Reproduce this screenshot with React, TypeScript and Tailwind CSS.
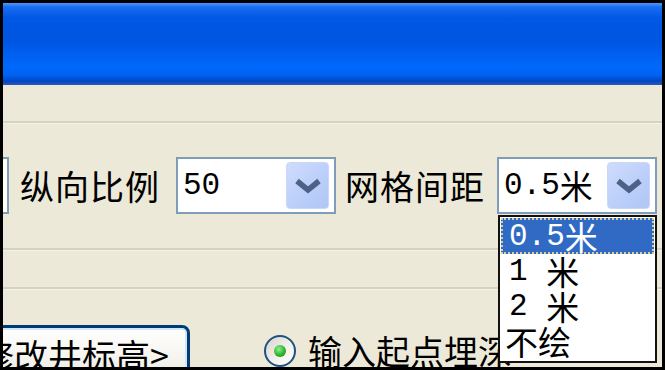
const cjk = "font-['Noto_Sans_CJK_SC','Noto_Sans_CJK_JP',sans-serif]";
const mono = "font-['Liberation_Mono',monospace]";

function Chevron() {
  return (
    <svg width="28" height="16" viewBox="0 0 28 16">
      <path d="M3 3 L14 12 L25 3" fill="none" stroke="#4d6185" strokeWidth="5.5" strokeLinejoin="miter" />
    </svg>
  );
}

function Combo({ children }: { children: React.ReactNode }) {
  return (
    <div className="flex h-[57px] w-[160px] items-center border-2 border-[#7f9db9] bg-white pl-[5px] pr-[5px]">
      <div className="flex flex-1 items-center text-black">{children}</div>
      <div className="flex h-[47px] w-[43px] items-center justify-center rounded-[4px] border border-[#c9d8fa] bg-[linear-gradient(135deg,#cfdcfc_0%,#bccffa_55%,#b0c6f5_100%)]">
        <Chevron />
      </div>
    </div>
  );
}

function Val({ num, unit, light }: { num: string; unit: string; light?: boolean }) {
  return (
    <span className={`flex items-center leading-none ${light ? "text-white" : "text-black"}`}>
      <span className={`${mono} whitespace-pre text-[31px]`}>{num}</span>
      <span className={`${cjk} text-[33px]`}>{unit}</span>
    </span>
  );
}

function Groove() {
  return <div className="h-[3px] w-full border-t-2 border-b border-[#d6d2c1] border-b-[#f4f2ea]" />;
}

export default function App() {
  return (
    <div className="h-[370px] w-[665px] overflow-hidden bg-black p-[3px]">
      <div className={`relative flex h-full flex-col overflow-hidden bg-[#ECE9D8] ${cjk}`}>
        <div className="h-[82px] shrink-0 bg-[linear-gradient(to_bottom,#4a98f8_0%,#1a6cf0_5%,#0058e4_18%,#0055e0_45%,#005ff0_62%,#0068fc_78%,#0062f2_88%,#0046c2_95%,#2c58b8_100%)]" />

        <div className="mt-[36px]">
          <Groove />
        </div>

        <div className="mt-[33px] flex h-[57px] items-center">
          <div className="h-[57px] w-[6px] border-2 border-l-0 border-[#7f9db9] bg-white" />
          <span className="ml-[11px] text-[34px] leading-none tracking-[1px] text-black">纵向比例</span>
          <div className="ml-[16px]">
            <Combo>
              <span className={`${mono} text-[31px] leading-none`}>50</span>
            </Combo>
          </div>
          <span className="ml-[9px] text-[34px] leading-none tracking-[1px] text-black">网格间距</span>
          <div className="ml-[12px]">
            <Combo>
              <Val num="0.5" unit="米" />
            </Combo>
          </div>
        </div>

        <div className="mt-[34px]">
          <Groove />
        </div>
        <div className="mt-[36px]">
          <Groove />
        </div>

        <div className="mt-[35px] flex items-start">
          <div className="ml-[-30px] flex h-[60px] w-[217px] shrink-0 items-center rounded-[8px] border-[3px] border-[#003c74] bg-[linear-gradient(to_bottom,#ffffff_0%,#f6f5f0_50%,#e8e6dc_100%)] pl-[4px] shadow-[inset_0_0_0_2px_#cee7ff]">
            <span className="whitespace-nowrap text-[34px] leading-none text-black">修改井标高&gt;</span>
          </div>
          <div className="ml-[74px] mt-[9px] flex items-center">
            <div className="flex h-[32px] w-[32px] items-center justify-center rounded-full border-2 border-[#1c5180] bg-[linear-gradient(135deg,#d6d3c8_0%,#f2f1ec_55%,#ffffff_100%)]">
              <div className="h-[12px] w-[12px] rounded-full bg-[radial-gradient(circle_at_40%_35%,#8ef08e_0%,#2fb42f_55%,#128012_100%)]" />
            </div>
            <span className="ml-[12px] whitespace-nowrap text-[34px] leading-none text-black">输入起点埋深</span>
          </div>
        </div>

        <div className="absolute left-[495px] top-[212px] flex h-[148px] w-[159px] flex-col border-2 border-[#111] bg-white p-[1px]">
          <div className="flex h-[36px] items-center border-2 border-dotted border-[#d8cf9c] bg-[#316ac5] pl-[6px]">
            <Val num="0.5" unit="米" light />
          </div>
          <div className="flex h-[35px] items-center pl-[8px]">
            <Val num="1 " unit="米" />
          </div>
          <div className="flex h-[35px] items-center pl-[8px]">
            <Val num="2 " unit="米" />
          </div>
          <div className="flex h-[35px] items-center pl-[4px]">
            <span className="text-[33px] leading-none text-black">不绘</span>
          </div>
        </div>
      </div>
    </div>
  );
}
